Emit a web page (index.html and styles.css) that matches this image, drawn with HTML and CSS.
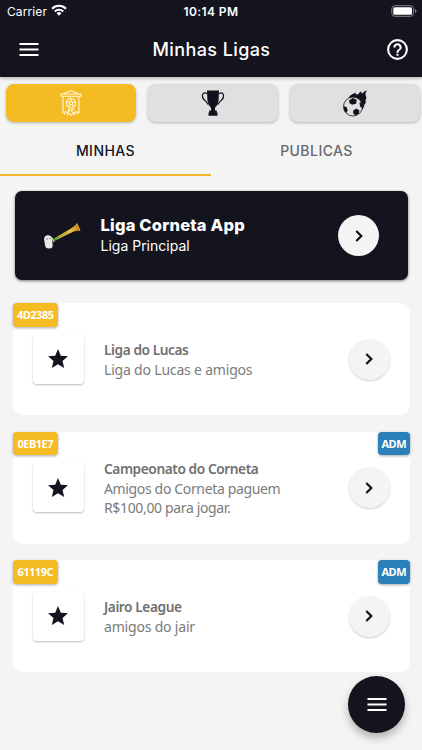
FILE: index.html
```html
<!DOCTYPE html>
<html lang="pt-BR">
<head>
<meta charset="utf-8">
<meta name="viewport" content="width=device-width, initial-scale=1">
<title>Minhas Ligas</title>
<link rel="stylesheet" href="styles.css">
</head>
<body>
<svg class="defs" width="0" height="0">
  <symbol id="chevron" viewBox="0 0 24 24"><path d="M9.3 7l5 5-5 5" fill="none" stroke="#10101a" stroke-width="2.2"/></symbol>
  <symbol id="star" viewBox="0 0 24 24"><path fill="#14141f" d="M12 17.27 18.18 21l-1.64-7.03L22 9.24l-7.19-.61L12 2 9.19 8.63 2 9.24l5.46 4.73L5.82 21z"/></symbol>
  <symbol id="menu" viewBox="0 0 24 24"><path fill="#fff" d="M2.500 5h19v2h-19zM2.500 10.500h19v2h-19zM2.500 16h19v2h-19z"/></symbol>
</svg>
<header class="top">
  <div class="status">
    <div class="carrier"><span class="carrier-name">Carrier</span>
      <svg class="wifi" width="16" height="12" viewBox="0 0 16 12"><g fill="none" stroke="#fff" stroke-width="2.1"><path d="M1 4.7a9.9 9.9 0 0 1 14 0"/><path d="M3.8 7.5a5.9 5.9 0 0 1 8.4 0"/></g><path fill="#fff" d="M5.6 9.2a3.4 3.4 0 0 1 4.800 0L8 11.7z"/></svg>
    </div>
    <time class="clock">10:14 PM</time>
    <svg class="battery" width="26" height="12" viewBox="0 0 26 12"><rect x=".8" y=".7" width="21.7" height="10.6" rx="3" fill="none" stroke="#85858c"/><rect x="2.3" y="2.2" width="18.7" height="7.6" rx="1.6" fill="#fff"/><path fill="#85858c" d="M24 4q1.5.6 1.5 2T24 8z"/></svg>
  </div>
  <div class="bar">
    <svg class="bar-menu" width="24" height="24"><use href="#menu"/></svg>
    <h1 class="title">Minhas Ligas</h1>
    <svg class="help" width="25" height="25" viewBox="0 0 24 24"><path fill="#fff" d="M11 18h2v-2h-2zm1-16a10 10 0 1 0 0 20 10 10 0 0 0 0-20m0 18a8 8 0 1 1 0-16 8 8 0 0 1 0 16m0-14a4 4 0 0 0-4 4h2a2 2 0 1 1 4 0c0 2-3 1.750-3 5h2c0-2.250 3-2.500 3-5a4 4 0 0 0-4-4"/></svg>
  </div>
</header>
<nav class="segments">
  <button class="segment active">
    <svg width="22" height="28" viewBox="0 0 22 28"><g fill="none" stroke="#fff6dc" stroke-width="1.100"><path d="M3 5 11 1.500 19 5M1 5h20v2.300H1zM3 7.500v16l3-.8 5 3.600 5-3.600 3 .8v-16"/><circle cx="11" cy="14" r="4.700"/><path d="m11 12 2 1.500-.8 2.300H9.800L9 13.500zM11 9.500V12M6.500 12.700l2.500.8M15.500 12.700l-2.500.8M8.300 17.800l1.500-2M13.700 17.800l-1.500-2"/><path d="M8.500 23.300v-3.100h2.300M8.500 21.700h2M14.100 20.600a1.500 1.500 0 1 0 0 2.300M4.500 24v1.800M7.500 24.500v1.800M14.500 24.500v1.800M17.500 24v1.800"/></g></svg>
  </button>
  <button class="segment">
    <svg width="26" height="28" viewBox="0 0 26 28"><path fill="#11111b" d="M7 1.500h12l-.4 10q-.6 4.800-3.600 7.300v2.700h1.800v2h.7v3.300H8.500v-3.300h.7v-2H11v-2.700Q8 16.300 7.400 11.500z"/><path d="M7 4.700C3.700 2.500 1.700 4.700 2.700 8.500 3.500 11.300 6.800 12 8 15.500M19 4.700c3.300-2.200 5.300 0 4.300 3.800-.8 2.800-4.100 3.500-5.300 7" fill="none" stroke="#11111b" stroke-width="1.300"/></svg>
  </button>
  <button class="segment">
    <svg width="26" height="28" viewBox="0 0 26 28"><path fill="#11111b" d="M6.500 9C8.500 5 11 5.600 14 3.300c-.7 1.800-.3 2.300 1 2.100C17.600 5 16.600 2.800 20 2.400c-1.300 1.600-.5 2.300.6 1.800 1.300-.6 1.300-2.400 4.400-2.700-1.800 2.200-2 3.500-.9 6 .5 1.500 0 3.500-1.300 5l1.700-.4c-.7 2.500-2.400 2.900-2.400 5.400L20 21z"/><circle cx="11" cy="17.500" r="9.500" fill="#e0e0e0" stroke="#11111b" stroke-width=".8"/><path fill="#11111b" d="m7.300 11 3.500-2 4 1.800-.8 4-4 1-2.800-2zM1.700 17l3 1.200 1 3.600L4 24Q1.200 21 1.700 17M11.200 21.500l3.300-2 2.900 2-.8 3.500-3.200 1.300-2.200-1.800zM17.500 13.700l1.700-.8q1.800 3 1.100 6l-2.300-1.500z"/></svg>
  </button>
</nav>
<div class="tabs"><div class="tab selected">MINHAS</div><div class="tab">PUBLICAS</div></div>
<main>
  <section class="featured">
    <svg class="horn" width="40" height="32" viewBox="0 0 40 32">
      <defs><linearGradient id="gold" x1="0" x2="1"><stop stop-color="#26803c"/><stop offset=".25" stop-color="#a8aa30"/><stop offset=".65" stop-color="#edbe42"/><stop offset="1" stop-color="#c17312"/></linearGradient></defs>
      <path fill="url(#gold)" d="M9 19.500 24.500 10.500Q31 7 33.800 3.200l3.600 7.800Q33 10.300 27 13.300L10.500 21.500z"/><path fill="#e9b64b" d="m33.700 3.700.5-.4 3.200 7-.8.4z"/><path d="m10 20.500 4-2.300" stroke="#45a44a" stroke-width="1.500"/><path d="m8.500 17 2.600 5" stroke="#c6b37c" stroke-width="1.400"/>
      <path fill="#e9e8e4" d="M1 19q.6-4 4-3.800 3.500.2 4.100 3.500l.6 7.300q-.4 2.800-4 2.500-3.400 0-3.600-3z"/><path fill="#55544e" d="M3.500 18.500h1.200v1H3.500zM6.500 18h1.200v1H6.500z"/>
    </svg>
    <div class="featured-text"><h2>Liga Corneta App</h2><p>Liga Principal</p></div>
    <button class="go"><svg width="24" height="24"><use href="#chevron"/></svg></button>
  </section>
  <article class="league">
    <span class="code">4D2385</span>
    <div class="starbox"><svg width="24" height="24"><use href="#star"/></svg></div>
    <div class="info"><h3>Liga do Lucas</h3><p class="single">Liga do Lucas e amigos</p></div>
    <button class="go"><svg width="24" height="24"><use href="#chevron"/></svg></button>
  </article>
  <article class="league">
    <span class="code">0EB1E7</span><span class="admin">ADM</span>
    <div class="starbox"><svg width="24" height="24"><use href="#star"/></svg></div>
    <div class="info double"><h3>Campeonato do Corneta</h3><p>Amigos do Corneta paguem<br>R$100,00 para jogar.</p></div>
    <button class="go"><svg width="24" height="24"><use href="#chevron"/></svg></button>
  </article>
  <article class="league">
    <span class="code">61119C</span><span class="admin">ADM</span>
    <div class="starbox"><svg width="24" height="24"><use href="#star"/></svg></div>
    <div class="info"><h3>Jairo League</h3><p class="single">amigos do jair</p></div>
    <button class="go"><svg width="24" height="24"><use href="#chevron"/></svg></button>
  </article>
</main>
<button class="fab"><svg width="24" height="24"><use href="#menu"/></svg></button>
</body>
</html>
```
FILE: styles.css
```css
* { box-sizing: border-box; }
html, body { height: 100%; overflow: hidden; }
body { margin: 0; background: #f4f4f4; color: #14141f; font-family: Inter, sans-serif; }
h1, h2, h3, p { margin: 0; }
button { border: 0; padding: 0; display: flex; align-items: center; justify-content: center; }
svg { display: block; flex: none; }
.defs { position: absolute; }
.top { height: 77px; background: #14141f; color: #fff; box-shadow: 0 1px 4px #0005; }
.status { height: 22px; display: grid; grid-template-columns: 1fr auto 1fr; align-items: center; padding: 0 5px 0 7px; font-size: 12px; }
.carrier { display: flex; align-items: center; gap: 4px; }
.carrier-name { letter-spacing: .1px; }
.wifi { margin-top: -2px; }
.clock { font-weight: 600; letter-spacing: .4px; margin-right: 2px; }
.battery { justify-self: end; margin-top: -1px; }
.bar { height: 55px; display: grid; grid-template-columns: 24px 1fr 25px; align-items: center; padding: 0 12px 0 17px; }
.title { text-align: center; font-size: 18px; font-weight: 500; letter-spacing: .4px; margin-right: 3px; }
.segments { display: grid; grid-template-columns: repeat(3, 130px); gap: 12px; padding: 7px 0 0 6px; }
.segment { height: 38px; border-radius: 8px; background: #e0e0e0; box-shadow: 0 1px 3px #0004; }
.segment.active { background: #f4bb22; }
.tabs { height: 54px; display: grid; grid-template: 54px / 1fr 1fr; }
.tab { height: 54px; text-align: center; font-size: 14px; font-weight: 500; line-height: 58px; letter-spacing: .45px; color: #66666c; }
.tab.selected { color: #14141f; border-bottom: 2px solid #f1b72b; }
main { padding: 15px 12.5px 0; }
.featured { height: 89px; margin: 0 2px 23px; display: flex; align-items: center; border-radius: 7px; background: #14141f; color: #fff; box-shadow: 0 1px 3px #0008; padding: 0 28.5px 0 28.5px; }
.featured-text { margin-left: 17.5px; flex: 1; }
.featured h2 { font-size: 16.5px; line-height: 22px; font-weight: 800; letter-spacing: .2px; margin-top: -1px; }
.featured p { font-size: 14px; line-height: 20px; }
.go { width: 41px; height: 41px; flex: none; border-radius: 50%; background: #f4f4f4; box-shadow: 0 1px 2px #0003; }
.league { height: 112px; margin-bottom: 16.5px; position: relative; display: flex; align-items: center; padding: 0 20px; border-radius: 10px; background: #fff; }
.code, .admin { position: absolute; top: 0; height: 23.5px; border-radius: 4px; color: #fff; background: #f4bb22; box-shadow: 0 1px 3px #0005; font: 700 11px/23px "Noto Sans", sans-serif; text-align: center; white-space: nowrap; }
.code { left: 0; width: 45.5px; letter-spacing: -.5px; }
.admin { right: 0; width: 31.5px; background: #2c80b9; letter-spacing: -.5px; }
.starbox { width: 51px; height: 49px; border-radius: 4px; background: #fff; box-shadow: 0 1px 2px #0004; display: flex; align-items: center; justify-content: center; }
.info { flex: 1; margin-left: 20.5px; padding-top: 2px; color: #7b7b7b; font-family: "Noto Sans", sans-serif; font-size: 14px; white-space: nowrap; }
.info.double { padding-top: 0; }
.info h3 { font-size: 13.7px; line-height: 20px; font-weight: 600; letter-spacing: -.42px; color: #707070; }
.info p { line-height: 19px; letter-spacing: -.35px; }
.info .single { line-height: 20px; letter-spacing: -.19px; }
.fab { position: absolute; left: 348px; top: 676px; width: 57px; height: 57px; border-radius: 50%; background: #14141f; box-shadow: 0 5px 8px #0004; }
```
